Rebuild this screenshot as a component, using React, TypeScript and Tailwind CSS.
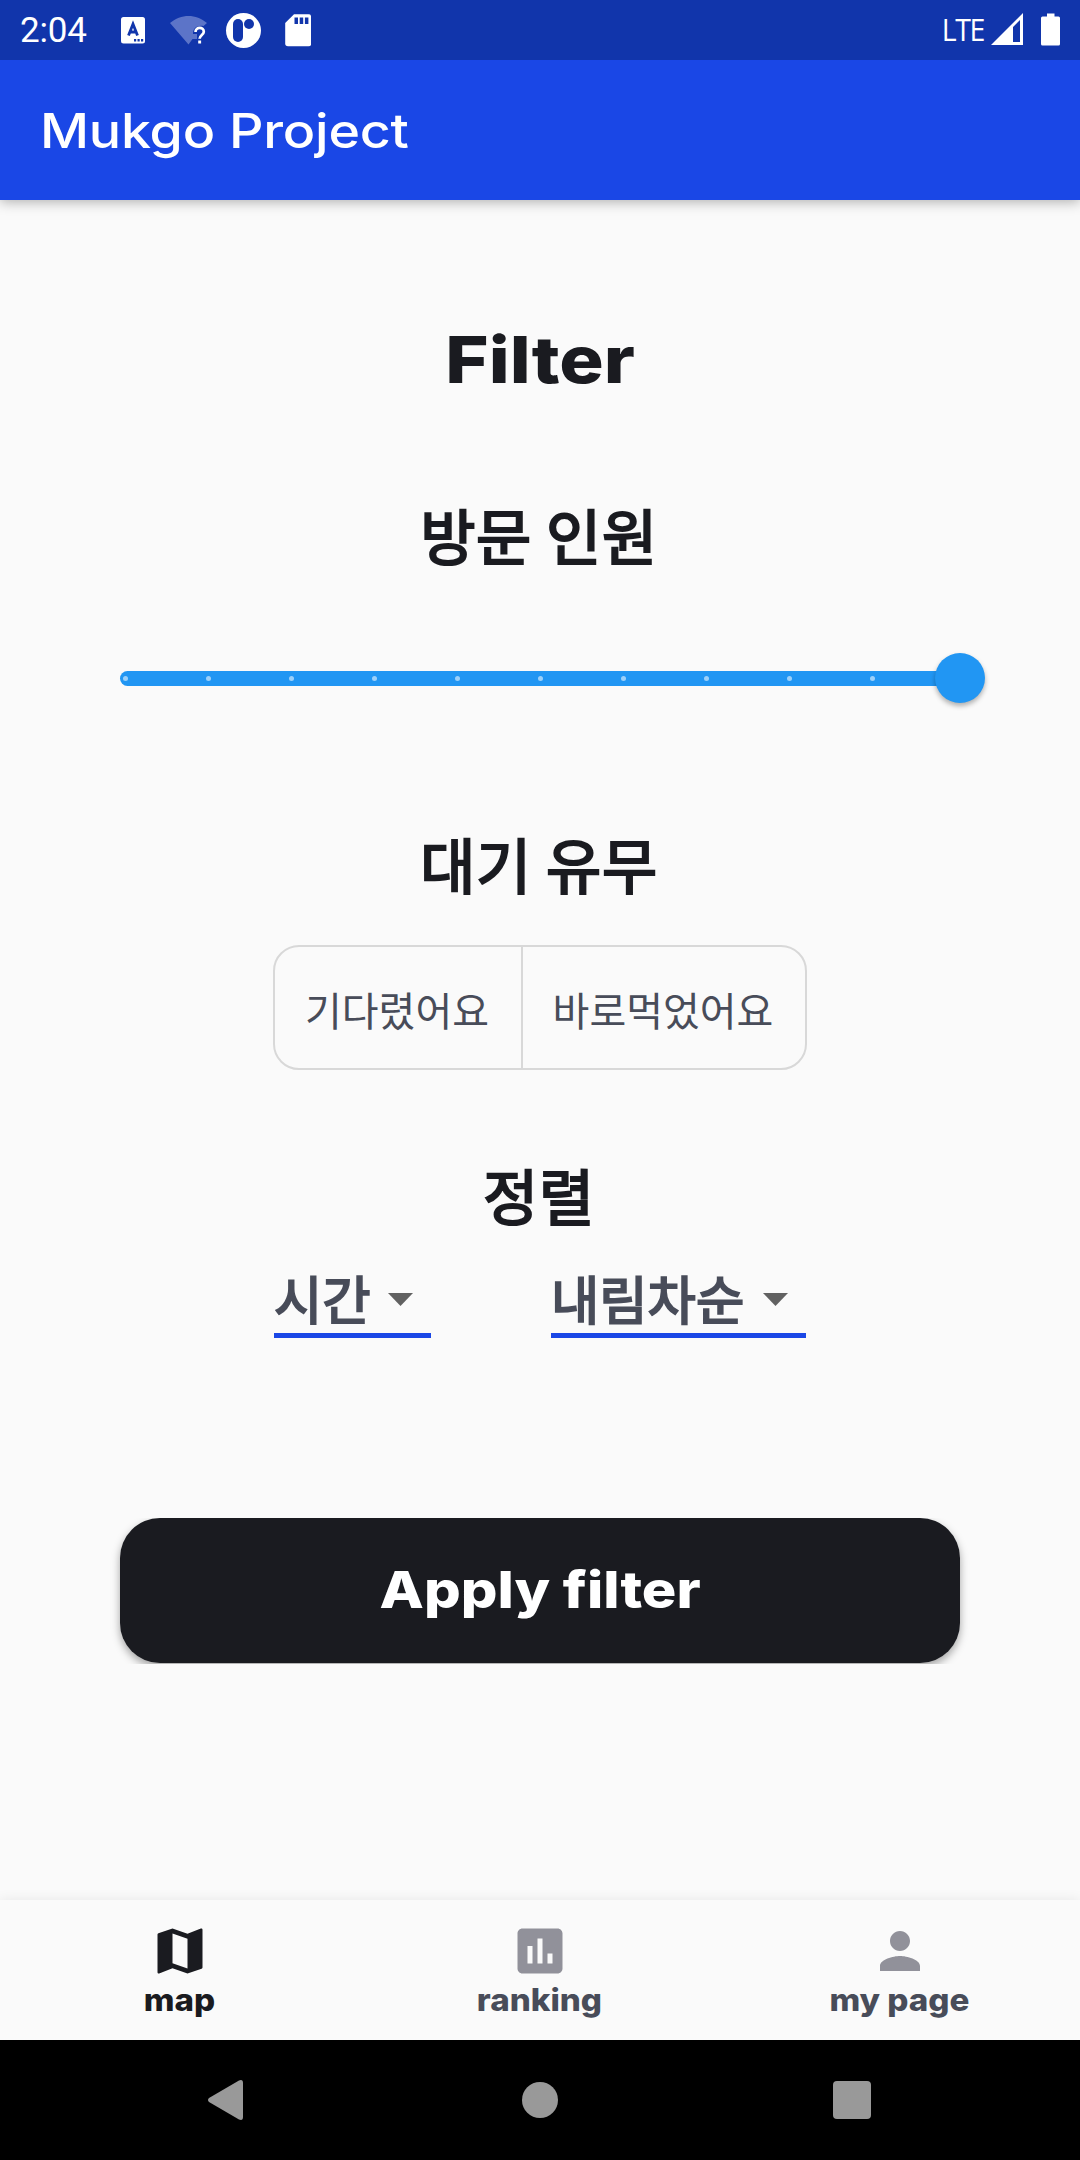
import type { ReactNode } from "react";
import { MdMap, MdPerson, MdPoll } from "react-icons/md";

function StatusBar() {
  return (
    <div className="flex h-[60px] items-center bg-[#1135ab] pl-[20px] pr-[20px] text-white">
      <span className="w-[101px] font-[Roboto] text-[35px] leading-[60px] tracking-[-0.2px]">
        <span className="relative top-px">2:04</span>
      </span>
      <svg className="h-[60px] w-[24px]" viewBox="0 0 24 60">
        <rect y="17" width="24" height="26.500" rx="2.500" fill="#fff" />
        <path d="M7.500 35.500 12 24l4.500 11.500M9 32h6" fill="none" stroke="#1135ab" strokeWidth="2.800" />
        <path d="M13 39h2.200v2.500H13zM16.500 39h2.200v2.500h-2.200zM20 39h2.200v2.500H20z" fill="#1135ab" />
      </svg>
      <svg className="ml-[25px] h-[60px] w-[38px]" viewBox="0 0 38 60">
        <path d="M0 23C11 13.500 26 13.500 37 23L33.500 26C27 25 23 28 23 34h4v5h-4.500L18.500 44.500Z" fill="#5c74c8" />
        <path d="M25.500 32c0-5.500 8.300-5.500 8.300-.2 0 3.200-4.200 3.200-4.200 7" fill="none" stroke="#fff" strokeWidth="2.700" />
        <rect x="28.200" y="40.500" width="2.900" height="3" fill="#fff" />
      </svg>
      <svg className="ml-[17px] h-[60px] w-[36px]" viewBox="0 0 36 60">
        <circle cx="18.500" cy="30.500" r="17.500" fill="#fff" />
        <rect x="8" y="19" width="10" height="23" rx="5" fill="#1135ab" />
        <circle cx="24" cy="24" r="5" fill="#1135ab" />
      </svg>
      <svg className="ml-[24px] h-[60px] w-[26px]" viewBox="0 0 26 60">
        <path d="M9 14.200h14.500q2.800 0 2.800 2.800v26.500q0 2.800-2.800 2.800h-20.500q-2.800 0-2.800-2.800V23Z" fill="#fff" />
        <path d="M9.500 17.500h3.500v6.500H9.500zM14.700 17.500h3.500v6.500h-3.500zM19.900 17.500h3.500v6.500h-3.500z" fill="#1135ab" />
      </svg>
      <span className="ml-auto origin-right scale-x-[0.92] font-[Open_Sans] text-[31px] leading-[56px] tracking-[-1.5px]">
        <span className="relative -top-px">LTE</span>
      </span>
      <svg className="ml-[7px] h-[60px] w-[32px]" viewBox="0 0 32 60">
        <path fillRule="evenodd" d="M0 45 32 13v32ZM22 27v15h7V20Z" fill="#fff" />
      </svg>
      <svg className="ml-[18px] h-[60px] w-[19px]" viewBox="0 0 19 60">
        <path d="M6 13.500h7.500v3H17.500q1.500 0 1.500 1.500v26q0 1.500-1.500 1.500h-16q-1.500 0-1.500-1.500V18q0-1.500 1.500-1.500H6Z" fill="#fff" />
      </svg>
    </div>
  );
}

function Heading({ children }: { children: ReactNode }) {
  return (
    <h2 className="h-[80px] pr-[2px] text-center font-['Noto_Sans_CJK_KR',sans-serif] text-[60px] leading-[73px] tracking-[0.7px] text-[#1a1b20] [-webkit-text-stroke:2.2px_#1a1b20]">
      {children}
    </h2>
  );
}

function Slider() {
  return (
    <div className="relative mx-[120px] mt-[76px] flex h-[50px] items-center">
      <div className="flex h-[15px] w-full items-center rounded-full bg-[#2196f3] pl-[2.5px]">
        {Array.from({ length: 10 }, (_, i) => (
          <span key={i} className="mr-[78px] size-[5px] shrink-0 rounded-full bg-white/55" />
        ))}
      </div>
      <span className="absolute -right-[25px] top-0 size-[50px] rounded-full bg-[#2196f3] shadow-[0_3px_5px_rgba(0,0,0,0.3)]" />
    </div>
  );
}

function Select({ label, className }: { label: string; className: string }) {
  return (
    <div className={`flex h-[74px] items-start border-b-[5px] border-[#1a47e6] ${className}`}>
      <span className="-mt-[2px] whitespace-nowrap font-['Noto_Sans_CJK_KR',sans-serif] text-[52.5px] leading-[70px] text-[#484c59] [-webkit-text-stroke:2px_#484c59]">
        {label}
      </span>
      <svg className="ml-auto mr-[18px] mt-[29px] h-[13px] w-[25px]" viewBox="0 0 25 13">
        <path d="M0 0h25L12.500 13Z" fill="#616161" />
      </svg>
    </div>
  );
}

function Tab({ icon, label, className }: { icon: ReactNode; label: string; className: string }) {
  return (
    <div className="flex w-[360px] flex-col items-center pt-[21px]">
      {icon}
      <span className={`-mt-px scale-x-[1.07] whitespace-nowrap pr-[1px] font-[Inter] text-[31px] font-extrabold leading-[40px] ${className}`}>{label}</span>
    </div>
  );
}

export default function App() {
  return (
    <div className="flex h-[2160px] w-[1080px] flex-col overflow-hidden bg-[#fafafa]">
      <header className="shadow-[0_2px_12px_rgba(0,0,0,0.3)]">
        <StatusBar />
        <div className="flex h-[140px] items-center bg-[#1a47e6] pl-[40px] pt-[2px]">
          <h1 className="origin-left scale-x-[1.12] whitespace-nowrap font-[Inter] text-[48px] font-medium leading-[60px] tracking-[-0.2px] text-white">Mukgo Project</h1>
        </div>
      </header>

      <main className="flex h-[1700px] flex-col">
        <h2 className="mt-[120px] h-[80px] text-center font-[Inter] text-[65px] font-extrabold leading-[80px] text-[#1a1b20]">
          <span className="inline-block scale-x-[1.14]">Filter</span>
        </h2>
        <div className="mt-[97px]">
          <Heading>방문 인원</Heading>
        </div>
        <Slider />
        <div className="mt-[123px]">
          <Heading>대기 유무</Heading>
        </div>
        <div className="ml-[273px] mt-[39px] flex h-[125px] w-[534px] rounded-[26px] border-[2px] border-[#d8d8d8] font-['Noto_Sans_CJK_KR',sans-serif] text-[40px] leading-[124px] text-[#484c59]">
          <div className="w-[248px] border-r-[2px] border-[#d8d8d8] pr-[2px] text-center">기다렸어요</div>
          <div className="flex-1 pr-[2px] text-center">바로먹었어요</div>
        </div>
        <div className="mt-[87px]">
          <Heading>정렬</Heading>
        </div>
        <div className="ml-[274px] mt-[27px] flex w-[532px] justify-between">
          <Select label="시간" className="w-[157px]" />
          <Select label="내림차순" className="w-[255px]" />
        </div>
        <div className="mt-[179.5px] h-[146px] overflow-hidden px-[110px] pb-px">
          <button className="mx-[10px] h-[145px] w-[840px] rounded-[40px] bg-[#1a1b20] font-[Inter] text-[51px] font-extrabold text-white shadow-[0_4px_8px_rgba(0,0,0,0.35)]">
            <span className="inline-block scale-x-[1.13]">Apply filter</span>
          </button>
        </div>
      </main>

      <nav className="flex h-[140px] bg-[#fafafa] shadow-[0_0_12px_rgba(0,0,0,0.08)]">
        <Tab icon={<MdMap className="size-[60px] text-[#1a1b20]" />} label="map" className="text-[#1a1b20]" />
        <Tab icon={<MdPoll className="size-[60px] text-[#91919a]" />} label="ranking" className="text-[#484c59]" />
        <Tab icon={<MdPerson className="size-[60px] text-[#91919a]" />} label="my page" className="text-[#484c59]" />
      </nav>

      <div className="flex h-[120px] items-center bg-black pl-[208px]">
        <svg className="h-[40px] w-[35px]" viewBox="0 0 35 40">
          <path d="M1 18Q-1 20 1 22L31 39.500Q35 41 35 37V3Q35-1 31 .5Z" fill="#999" />
        </svg>
        <span className="ml-[279px] size-[36px] rounded-full bg-[#999]" />
        <span className="ml-[275px] size-[38px] rounded-[4px] bg-[#999]" />
      </div>
    </div>
  );
}
